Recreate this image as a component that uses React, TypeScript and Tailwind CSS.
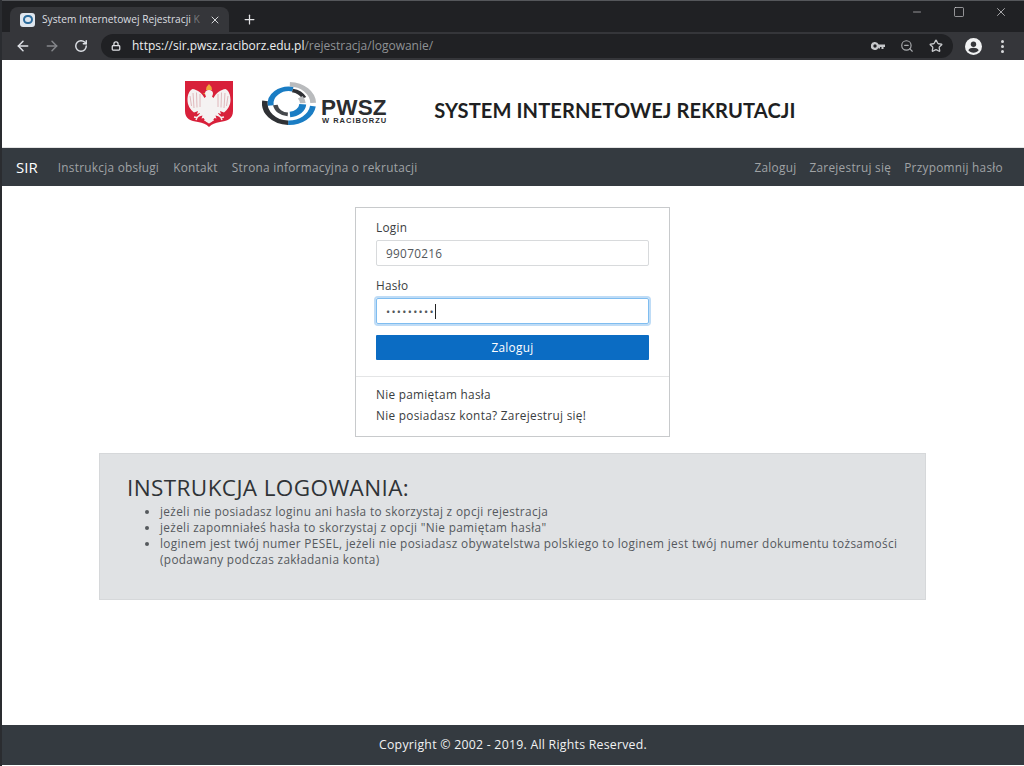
import { ArrowLeft, ArrowRight, RotateCw, Lock, ZoomOut, Star, Plus, X, Minus, Square } from 'lucide-react';

const EagleHalf = () => (
  <>
    <path d="M24 9c-2.500 0-4 1.500-4 3.500 0 1 .5 2 1 3l-1.500 1.500C17 12 12 8.500 7.500 8 4 10 2.500 14 2.500 19c0 5 2.500 9.500 6.500 12.500l4-1.500-1 3 3-1-1 3.500 3.500-1-1 3 2-.5 3 4 3 1.500z" fill="#f5f2f2" />
    <path d="M8 12l1 15M11.500 11.500l.5 15M15 13l0 13M5 15l1.500 10" stroke="#d9a8ad" strokeWidth=".8" fill="none" />
    <path d="M19 30L12 36.500M12 36.500l-3-.5M12 36.500l-1 2.500" stroke="#f5f2f2" strokeWidth="1.500" fill="none" />
    <path d="M24 33l-5 6.500 5 2.500z" fill="#f5f2f2" />
  </>
);

const Emblem = () => (
  <svg width="48" height="46" viewBox="0 0 48 46" className="shrink-0">
    <path d="M0 0h48v30c0 8-6 10-13 11-5 .7-8 2-11 5-3-3-6-4.300-11-5C6 40 0 38 0 30z" fill="#d8203a" />
    <path d="M21.500 6l2.500-3 2.500 3 .5 3h-6z" fill="#eda93c" />
    <EagleHalf />
    <g transform="translate(48 0) scale(-1 1)">
      <EagleHalf />
    </g>
    <path d="M20 12h-2l2 1.500z" fill="#eda93c" />
  </svg>
);

const arc = (r: number, a0: number, a1: number) => {
  const p = (a: number) => [30 + r * Math.cos((a * Math.PI) / 180), 24 + r * Math.sin((a * Math.PI) / 180)].map((v) => v.toFixed(2)).join(' ');
  return `M${p(a0)}A${r} ${r} 0 ${a1 - a0 > 180 ? 1 : 0} 1 ${p(a1)}`;
};

const PwszLogo = () => (
  <div className="flex items-end shrink-0">
    <svg width="60" height="46" viewBox="0 0 60 46" fill="none">
      <g transform="translate(27 22.500) scale(1.150 0.915) translate(-30 -24)">
        <path d={arc(21, 272, 358)} stroke="#b9bbbd" strokeWidth="5" />
        <path d={arc(21, 8, 92)} stroke="#1a7dc4" strokeWidth="5" />
        <path d={arc(21, 92, 188)} stroke="#2f3135" strokeWidth="5" />
        <path d={arc(16, 172, 282)} stroke="#1a7dc4" strokeWidth="5" />
        <path d={arc(14.500, 282, 335)} stroke="#2f3135" strokeWidth="4" />
        <path d={arc(12, 325, 358)} stroke="#b9bbbd" strokeWidth="5" />
        <path d={arc(12, 4, 86)} stroke="#1a7dc4" strokeWidth="6" />
        <path d={arc(12, 95, 172)} stroke="#45484c" strokeWidth="4" />
      </g>
    </svg>
    <div className="-ml-[1px] flex flex-col items-start mb-[3px] font-['Liberation_Sans',sans-serif] font-bold text-[#2b2d30]">
      <span className="text-[22.5px] leading-[17px] tracking-[0.2px]">PWSZ</span>
      <span className="text-[7.5px] leading-[7px] tracking-[1px] mt-[1px] ml-[1px] whitespace-nowrap">W RACIBORZU</span>
    </div>
  </div>
);

const KeyIcon = () => (
  <svg width="14" height="8" viewBox="0 0 14 8" className="text-[#c6c8cb] mr-[15px]" fill="currentColor">
    <path fillRule="evenodd" d="M4 0a4 4 0 0 1 3.700 2.500H14V5h-1.500v2h-2V5H9v1.500H7.500V5.500A4 4 0 1 1 4 0zm0 2.300a1.700 1.700 0 1 0 0 3.400 1.700 1.700 0 0 0 0-3.400z" />
  </svg>
);

const ProfileIcon = () => (
  <svg width="17" height="17" viewBox="0 0 17 17" className="ml-[12px] shrink-0">
    <circle cx="8.500" cy="8.500" r="8.500" fill="#f1f2f3" />
    <circle cx="8.500" cy="6.300" r="2.700" fill="#35363a" />
    <path d="M3.300 12.300c1-1.800 3-2.500 5.200-2.500s4.200.7 5.200 2.500c-1.200 1.500-3.100 2.400-5.200 2.400s-4-.9-5.200-2.400z" fill="#35363a" />
  </svg>
);

const NavLink = ({ children }: { children: string }) => (
  <a className="text-[11.8px] tracking-[0.28px] text-[#a0a3a6] whitespace-nowrap">{children}</a>
);

export default function App() {
  return (
    <div className="h-[766px] w-[1024px] flex flex-col overflow-hidden bg-white border-l-2 border-[#2a2c30] font-['Open_Sans',sans-serif]">
      {/* chrome */}
      <div className="h-[32px] bg-[#202124] flex items-end pl-[8px] shrink-0 border-t border-[#55575b]">
        <div className="w-[219px] h-[25px] bg-[#35363a] rounded-t-lg flex items-center pl-[10px] pr-[8px]">
          <div className="w-[15px] h-[14px] rounded-[3px] bg-[#dfe6ee] flex items-center justify-center shrink-0">
            <div className="w-[10px] h-[9px] rounded-full border-2 border-[#2c6c9c]" />
          </div>
          <span className="ml-[7px] flex-1 overflow-hidden whitespace-nowrap text-[10.2px] text-[#dcdee0]">System Internetowej Rejestracji <span className="text-[#77797c]">K</span></span>
          <X size={12} className="text-[#d5d7da] ml-1 shrink-0" />
        </div>
        <Plus size={15} strokeWidth={2} className="text-[#e3e4e6] ml-[13px] mb-[5px]" />
        <div className="flex-1" />
        <div className="flex items-center mr-[16px] mb-[13px] text-[#d8d9db]">
          <Minus size={12} strokeWidth={1.25} />
          <Square size={12} strokeWidth={1.25} className="ml-[30px]" />
          <X size={14} strokeWidth={1.25} className="ml-[29px]" />
        </div>
      </div>
      <div className="h-[28px] bg-[#35363a] flex items-center shrink-0 pl-[13px] text-[#dee1e6]">
        <ArrowLeft size={16} strokeWidth={2.25} className="shrink-0" />
        <ArrowRight size={16} strokeWidth={2.25} className="ml-[13px] text-[#85878b] shrink-0" />
        <RotateCw size={14} strokeWidth={2.5} className="ml-[14px] shrink-0" />
        <div className="ml-[13px] h-[24px] w-[852px] shrink-0 rounded-full bg-[#202124] flex items-center pl-[10px] pr-[10px]">
          <Lock size={10} strokeWidth={3} className="text-[#dfe1e5] shrink-0" />
          <span className="ml-[11px] text-[12px] text-[#eceef0] whitespace-nowrap">https://sir.pwsz.raciborz.edu.pl<span className="text-[#8f9296]">/rejestracja/logowanie/</span></span>
          <div className="flex-1" />
          <KeyIcon />
          <ZoomOut size={14} className="text-[#a9abae] mr-[15px] shrink-0" />
          <Star size={14} strokeWidth={2.25} className="text-[#c6c8cb] shrink-0" />
        </div>
        <ProfileIcon />
        <div className="ml-[19px] flex flex-col gap-[2px] shrink-0">
          <span className="w-[3px] h-[3px] rounded-full bg-[#d8d9db]" />
          <span className="w-[3px] h-[3px] rounded-full bg-[#d8d9db]" />
          <span className="w-[3px] h-[3px] rounded-full bg-[#d8d9db]" />
        </div>
      </div>
      {/* logo header */}
      <div className="h-[88px] shrink-0 flex items-center pl-[183px] pr-4 pt-[1px] border-b border-[#e4e4e4]">
        <Emblem />
        <div className="ml-[29px]"><PwszLogo /></div>
        <h1 className="ml-[47px] mt-[12px] text-[20.1px] font-bold text-[#1e1f22] whitespace-nowrap font-['Lato',sans-serif] tracking-[0.1px]">SYSTEM INTERNETOWEJ REKRUTACJI</h1>
      </div>
      {/* nav */}
      <nav className="h-[38px] bg-[#343a40] shrink-0 flex items-center pl-[14px] pr-[21px] pt-[1px]">
        <span className="text-[15px] text-white mr-[20px]">SIR</span>
        <div className="flex gap-[14px]">
          <NavLink>Instrukcja obsługi</NavLink>
          <NavLink>Kontakt</NavLink>
          <NavLink>Strona informacyjna o rekrutacji</NavLink>
        </div>
        <div className="flex-1" />
        <div className="flex gap-[13px]">
          <NavLink>Zaloguj</NavLink>
          <NavLink>Zarejestruj się</NavLink>
          <NavLink>Przypomnij hasło</NavLink>
        </div>
      </nav>
      {/* content */}
      <main className="flex-1 flex flex-col items-center pt-[21px] pr-[2px]">
        <div className="w-[315px] h-[230px] ml-[1px] border border-[#c8cacc] bg-white flex flex-col text-[11.8px] tracking-[0.3px] text-[#3a3d40]">
          <div className="px-[20px] pt-[11px]">
            <label className="block leading-[16px]">Login</label>
            <div className="mt-[5px] h-[26px] border border-[#d8dadc] rounded-[2px] flex items-center px-[9px] pt-[1px] text-[#53575b]">99070216</div>
            <label className="block mt-[11px] leading-[16px]">Hasło</label>
            <div className="mt-[5px] h-[26px] border border-[#7fbdf0] rounded-[2px] shadow-[0_0_0_2px_#bfdcf6] flex items-center px-[9px] text-[11px] text-[#53575b]">
              <span className="tracking-[1.3px] leading-none">•••••••••</span>
              <span className="w-px h-[15px] bg-[#222]" />
            </div>
            <button className="mt-[11px] w-full h-[25px] bg-[#0b6cc3] rounded-[1px] pt-[1px] text-white font-medium">Zaloguj</button>
          </div>
          <div className="mt-[16px] border-t border-[#e4e5e6] px-[20px] pt-[9px]">
            <div className="leading-[16px]">Nie pamiętam hasła</div>
            <div className="mt-[5px] leading-[16px]">Nie posiadasz konta? Zarejestruj się!</div>
          </div>
        </div>
        <section className="mt-[16px] w-[827px] ml-[1px] h-[147px] bg-[#e0e2e4] border border-[#d6d8da] px-[27px] pt-[21px]">
          <h2 className="text-[22.5px] leading-[26px] tracking-[0.4px] font-normal text-[#2f3337]">INSTRUKCJA LOGOWANIA:</h2>
          <ul className="mt-[2px] ml-[33px] list-disc text-[11.8px] tracking-[0.34px] leading-[16px] text-[#55595d]">
            <li>jeżeli nie posiadasz loginu ani hasła to skorzystaj z opcji rejestracja</li>
            <li>jeżeli zapomniałeś hasła to skorzystaj z opcji "Nie pamiętam hasła"</li>
            <li>loginem jest twój numer PESEL, jeżeli nie posiadasz obywatelstwa polskiego to loginem jest twój numer dokumentu tożsamości (podawany podczas zakładania konta)</li>
          </ul>
        </section>
      </main>
      <footer className="h-[40px] bg-[#343a40] shrink-0 flex items-center justify-center text-[12.3px] tracking-[0.25px] font-medium text-[#f1f2f3] mb-[1px]">
        Copyright © 2002 - 2019. All Rights Reserved.
      </footer>
    </div>
  );
}
